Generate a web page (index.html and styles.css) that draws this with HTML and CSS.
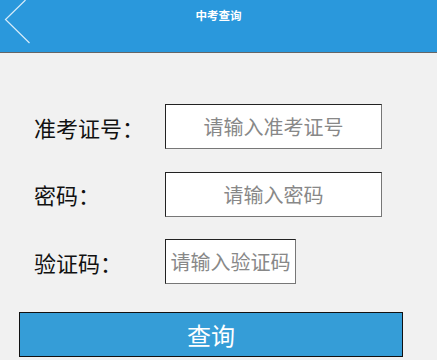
FILE: index.html
```html
<!DOCTYPE html>
<html>
<head>
	<meta charset="utf-8"/>
	<title>中考查询</title>
	<link rel="stylesheet" href="styles.css">
</head>
<body>
	<div class="header">
		<a class="back" href="#">
			<svg width="32" height="44" viewBox="0 0 32 44">
				<polyline points="25.5,0 5.5,19.5 29.5,43" fill="none" stroke="#d6ecfa" stroke-width="1.2"/>
			</svg>
		</a>
		<h1 class="title">中考查询</h1>
	</div>

	<form class="form">
		<div class="row">
			<label class="label">准考证号：</label>
			<input class="ipt" type="text" placeholder="请输入准考证号">
		</div>
		<div class="row">
			<label class="label">密码：</label>
			<input class="ipt" type="password" placeholder="请输入密码">
		</div>
		<div class="row">
			<label class="label">验证码：</label>
			<input class="ipt ipt-code" type="text" placeholder="请输入验证码">
		</div>
		<button class="btn" type="button">查询</button>
	</form>
</body>
</html>
```

FILE: styles.css
```css
*{margin: 0;padding: 0;box-sizing: border-box;}
body{
	background: #f1f1f1;
	font-family: "Noto Sans CJK SC", "Liberation Sans", sans-serif;
	color: #111;
}
.header{
	position: relative;
	height: 53px;
	background: #2a98dc;
	border-bottom: 1px solid #666;
	padding-top: 8px;
}
.back{
	position: absolute;
	left: 0;
	top: 0;
	display: block;
	width: 32px;
	height: 44px;
}
.back svg{display: block;}
.title{
	text-align: center;
	font-size: 11.5px;
	line-height: 15px;
	font-weight: bold;
	color: #fff;
}
.form{
	padding: 51px 0 0 19px;
}
.row{
	display: flex;
	align-items: center;
	margin-bottom: 22.5px;
}
.label{
	width: 146px;
	padding-left: 15px;
	font-size: 22px;
	line-height: 30px;
}
.ipt{
	width: 217px;
	height: 45px;
	border: 1px solid;
	border-color: #222 #777 #777 #222;
	background: #fff;
	font-family: inherit;
	font-size: 20px;
	text-align: center;
	outline: none;
}
.ipt::placeholder{color: #888;}
.ipt-code{
	width: 131px;
	padding: 0 4px;
}
.btn{
	display: block;
	width: 384px;
	height: 45px;
	margin-top: 28px;
	background: #359dd7;
	border: 1px solid #111;
	color: #fff;
	font-family: inherit;
	font-size: 24px;
	line-height: 40px;
}
```
